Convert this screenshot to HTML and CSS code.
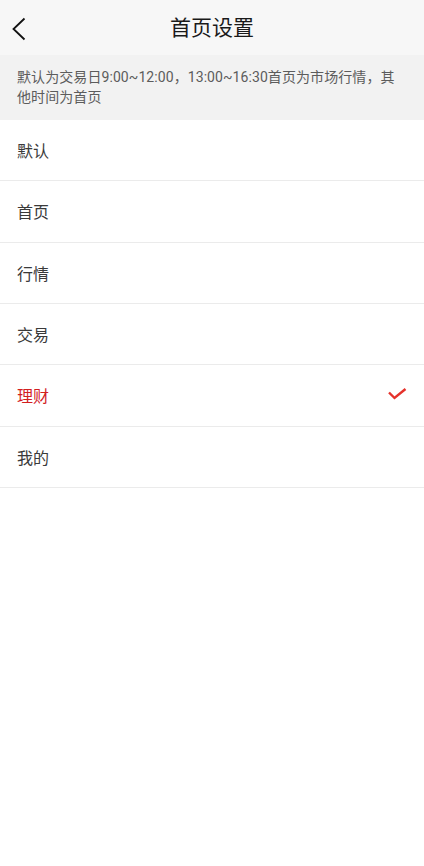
FILE: index.html
```html
<!DOCTYPE html>
<html lang="zh">
<head>
<meta charset="utf-8">
<title>首页设置</title>
<link rel="stylesheet" href="styles.css">
</head>
<body>
<header class="topbar">
  <span class="back">
    <svg width="14" height="24" viewBox="0 0 14 24"><polyline points="12.5,1.5 1.5,12 12.5,22.5" fill="none" stroke="#111" stroke-width="1.8"/></svg>
  </span>
  <h1 class="title">首页设置</h1>
</header>
<div class="notice">默认为交易日9:00~12:00，13:00~16:30首页为市场行情，其他时间为首页</div>
<ul class="options">
  <li class="option">默认</li>
  <li class="option">首页</li>
  <li class="option">行情</li>
  <li class="option">交易</li>
  <li class="option selected">理财
    <svg class="check" width="19" height="12" viewBox="0 0 19 12"><polyline points="1,4.5 6.5,10 17.5,1" fill="none" stroke="#e5322b" stroke-width="2.4"/></svg>
  </li>
  <li class="option">我的</li>
</ul>
</body>
</html>
```
FILE: styles.css
```css
html, body {
  margin: 0;
  padding: 0;
  background: #ffffff;
  font-family: Roboto, "Noto Sans CJK SC", sans-serif;
}
.topbar {
  height: 55px;
  background: #f7f7f7;
  display: flex;
  align-items: center;
  justify-content: center;
  position: relative;
}
.back {
  position: absolute;
  left: 12px;
  top: 17px;
  display: flex;
}
.title {
  margin: 0;
  font-size: 21px;
  font-weight: 400;
  color: #1a1a1a;
  line-height: 1;
  padding-top: 2px;
}
.notice {
  background: #f2f2f2;
  padding: 12px 24px 13px 17px;
  font-size: 14px;
  letter-spacing: 0.08px;
  line-height: 20px;
  color: #5c5c5c;
  height: 40px;
}
.options {
  list-style: none;
  margin: 0;
  padding: 0;
}
.option {
  height: 60.33px;
  border-bottom: 1px solid #ebebeb;
  display: flex;
  align-items: center;
  justify-content: space-between;
  padding: 0 17px 0 17px;
  font-size: 16px;
  color: #3a3a3a;
}
.option.selected {
  color: #d2201f;
}
.check {
  margin-top: -2px;
}
```
